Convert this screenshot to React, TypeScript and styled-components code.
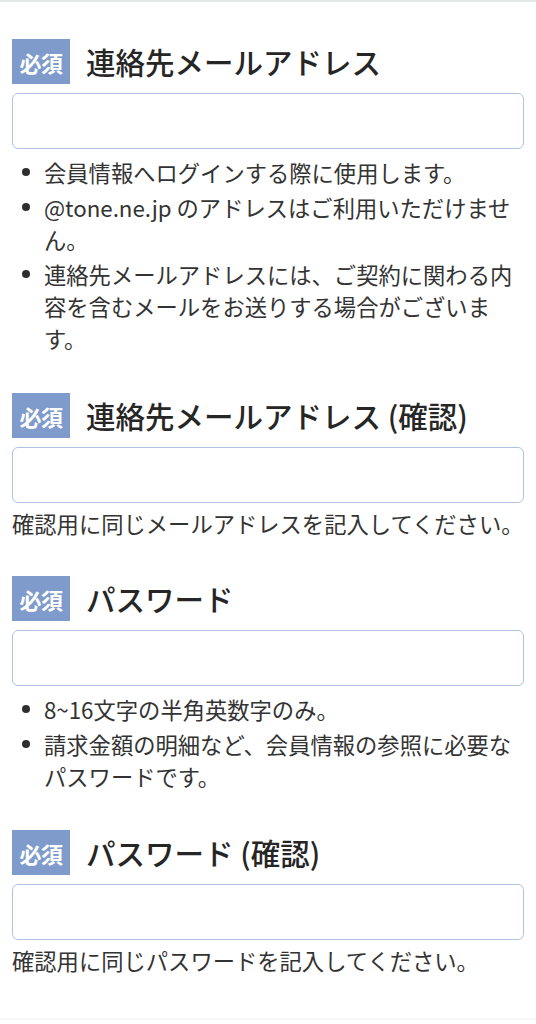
import React from "react";
import styled, { createGlobalStyle } from "styled-components";

const Global = createGlobalStyle`
  html, body { margin: 0; padding: 0; background: #ffffff; }
  body {
    font-family: "Noto Sans CJK JP", "Noto Sans", sans-serif;
    color: #333333;
  }
`;

const Page = styled.div`
  border-top: 2px solid #e2e8e6;
  border-bottom: 2px solid #f6f7f7;
  padding: 37px 12px 0 12px;
  height: 1020px;
  box-sizing: border-box;
  display: flex;
  flex-direction: column;
`;

const Section = styled.section<{ $gap: number }>`
  display: flex;
  flex-direction: column;
  margin-bottom: ${(p) => p.$gap}px;
`;

const HeadingRow = styled.div`
  display: flex;
  align-items: center;
  gap: 16px;
  height: 45px;
`;

const Badge = styled.span`
  display: flex;
  align-items: center;
  justify-content: center;
  width: 58px;
  height: 45px;
  background: #7f9bcb;
  color: #ffffff;
  font-size: 22px;
  font-weight: 700;
  letter-spacing: -0.5px;
`;

const Title = styled.h2`
  margin: 0;
  font-size: 29.5px;
  font-weight: 500;
  line-height: 45px;
  color: #262626;
`;

const Input = styled.input`
  display: block;
  margin-top: 9px;
  width: 100%;
  height: 56px;
  box-sizing: border-box;
  border: 1px solid #b0c2e2;
  border-radius: 6px;
  background: #ffffff;
  font-size: 20px;
  padding: 0 12px;
  outline: none;
`;

const List = styled.ul`
  margin: 7px 0 0 0;
  padding: 0 0 0 32px;
  list-style: none;
  font-size: 22.3px;
  line-height: 32px;
  color: #333333;
`;

const Item = styled.li`
  position: relative;
  margin-bottom: 3px;
  &:last-child { margin-bottom: 0; }
  &::before {
    content: "";
    position: absolute;
    left: -22px;
    top: 12px;
    width: 8px;
    height: 8px;
    border-radius: 50%;
    background: #2e2e2e;
  }
`;

const Note = styled.p`
  margin: 4px 0 0 0;
  font-size: 22.3px;
  line-height: 32px;
  color: #333333;
`;

type Field = {
  title: string;
  bullets?: string[];
  note?: string;
  gap: number;
};

const fields: Field[] = [
  {
    title: "連絡先メールアドレス",
    bullets: [
      "会員情報へログインする際に使用します。",
      "@tone.ne.jp のアドレスはご利用いただけません。",
      "連絡先メールアドレスには、ご契約に関わる内容を含むメールをお送りする場合がございます。",
    ],
    gap: 39,
  },
  {
    title: "連絡先メールアドレス (確認)",
    note: "確認用に同じメールアドレスを記入してください。",
    gap: 37,
  },
  {
    title: "パスワード",
    bullets: [
      "8~16文字の半角英数字のみ。",
      "請求金額の明細など、会員情報の参照に必要なパスワードです。",
    ],
    gap: 38,
  },
  {
    title: "パスワード (確認)",
    note: "確認用に同じパスワードを記入してください。",
    gap: 0,
  },
];

export default function App() {
  return (
    <>
      <Global />
      <Page>
        {fields.map((f) => (
          <Section key={f.title} $gap={f.gap}>
            <HeadingRow>
              <Badge>必須</Badge>
              <Title>{f.title}</Title>
            </HeadingRow>
            <Input type={f.title.startsWith("パスワード") ? "password" : "email"} />
            {f.bullets && (
              <List>
                {f.bullets.map((b) => (
                  <Item key={b}>{b}</Item>
                ))}
              </List>
            )}
            {f.note && <Note>{f.note}</Note>}
          </Section>
        ))}
      </Page>
    </>
  );
}
